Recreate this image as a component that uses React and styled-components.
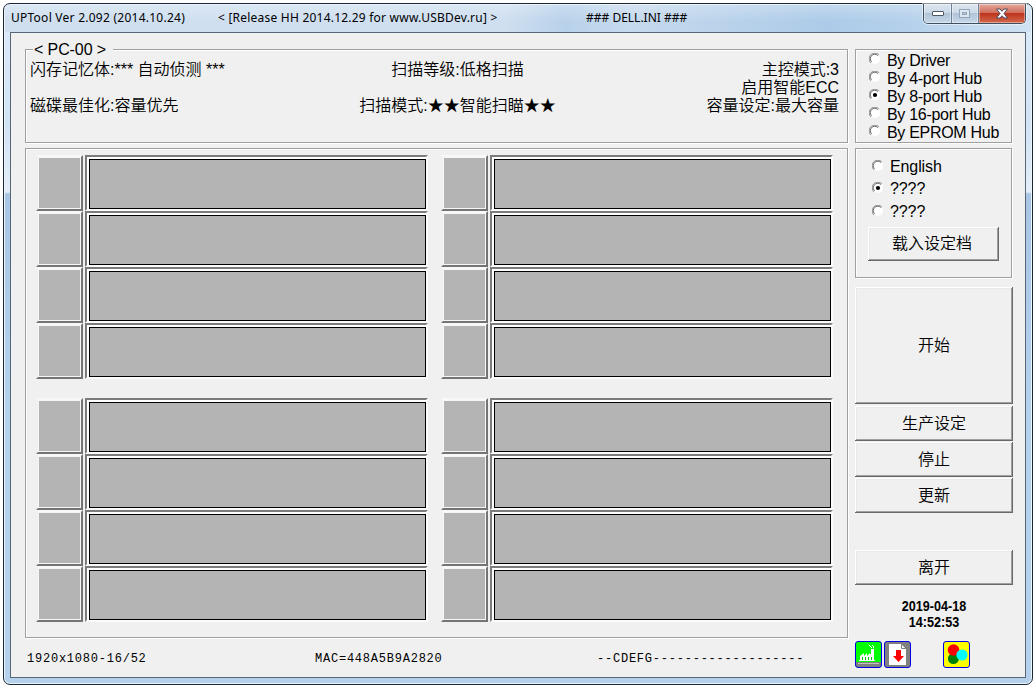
import React, { useState } from "react";
import styled, { createGlobalStyle } from "styled-components";

const GlobalStyle = createGlobalStyle`
    * {
        box-sizing: border-box;
    }
    body {
        margin: 0;
        background: #ffffff;
        overflow: hidden;
        color: #000000;
        font-family: "Liberation Sans", "Noto Sans CJK SC", sans-serif;
        font-size: 16px;
        font-weight: 350;
    }
    button {
        font: inherit;
        color: inherit;
    }
`;

const Window = styled.div`
    display: flex;
    flex-direction: column;
    width: 1030px;
    height: 682px;
    margin: 3px;
    padding: 0 6px 6px;
    border: 1px solid #1c2733;
    border-radius: 7px;
    background: linear-gradient(
        #dcebf8 0,
        #d2e3f4 120px,
        #e4eef8 188px,
        #a8c6e3 190px,
        #b5d2ed 420px,
        #b4d0ea 100%
    );
    box-shadow: inset 0 0 0 1px #e9f4fc;
`;

const TitleBar = styled.div`
    display: flex;
    align-items: flex-start;
    height: 27px;
    margin: 1px -5px 0;
    padding-left: 6px;
    border-radius: 5px 5px 0 0;
    background:
        linear-gradient(rgba(255, 255, 255, 0.25), rgba(255, 255, 255, 0) 60%),
        linear-gradient(
            90deg,
            #cfdff0 0,
            #cfdff0 500px,
            #b8d1ea 560px,
            #c6daee 620px,
            #bcd4eb 700px,
            #adcbe8 820px,
            #b4d0eb 900px,
            #cfe1f2 100%
        );
`;

const TitleText = styled.span`
    width: ${(props) => props.$width}px;
    line-height: 25px;
    font-family: "Noto Sans", "Open Sans", sans-serif;
    font-size: 12px;
    font-weight: 400;
    letter-spacing: ${(props) => props.$spacing || 0}px;
    white-space: pre;
`;

const WindowButtons = styled.div`
    display: flex;
    height: 20px;
    margin: -1px 5px 0 auto;
    border: 1px solid #3f4f60;
    border-top: none;
    border-radius: 0 0 5px 5px;
    box-shadow: 0 0 0 1px rgba(255, 255, 255, 0.5);
    overflow: hidden;
`;

const WindowButton = styled.div`
    display: flex;
    align-items: center;
    justify-content: center;
    width: ${(props) => props.$width}px;
    border-right: ${(props) => (props.$close ? "none" : "1px solid #6c8299")};
    box-shadow: inset 0 0 0 1px rgba(255, 255, 255, 0.4);
    background: ${(props) =>
        props.$close
            ? "linear-gradient(#e3a99c, #cf6c59 48%, #bd351d 50%, #d3684c)"
            : "linear-gradient(#dce6f0, #ccd9e6 48%, #b1c4d7 50%, #c6d8e9)"};
`;

const Client = styled.div`
    display: flex;
    gap: 7px;
    flex: 1;
    padding: 16px 13px 0 14px;
    border: 1px solid #56677a;
    background: #f0f0f0;
`;

const MainColumn = styled.div`
    display: flex;
    flex-direction: column;
    width: 823px;
`;

const SideColumn = styled.div`
    display: flex;
    flex-direction: column;
    width: 158px;
`;

const Group = styled.div`
    width: ${(props) => props.$width}px;
    height: ${(props) => props.$height}px;
    margin-bottom: 5px;
    padding: ${(props) => props.$padding || "0"};
    border: 1px solid #a0a0a0;
    box-shadow:
        inset 1px 1px 0 #ffffff,
        1px 1px 0 #ffffff;
`;

const Legend = styled.div`
    width: 80px;
    height: 18px;
    margin: -9px 0 0 7px;
    padding-left: 1px;
    background: #f0f0f0;
    letter-spacing: -0.1px;
    line-height: 18px;
    white-space: pre;
`;

const Info = styled.div`
    display: grid;
    grid-template-columns: 270px 315px 1fr;
    padding: 2px 8px 0 4px;
    line-height: 18px;
    white-space: pre;
`;

const InfoCell = styled.div`
    height: 18px;
    text-align: ${(props) => props.$align || "left"};
`;

const Bank = styled.div`
    display: grid;
    grid-template-columns: 392px 392px;
    column-gap: 13px;
    margin-bottom: 19px;
`;

const Slot = styled.div`
    display: flex;
    gap: 2px;
    height: 56px;
`;

const SlotTile = styled.div`
    width: 47px;
    height: 56px;
    border: 2px solid;
    border-color: #f8f8f8 #747474 #747474 #f0f0f0;
    box-shadow: inset 0 0 0 1px #f6f6f6;
    background: #b4b4b4;
`;

const SlotFrame = styled.div`
    width: 343px;
    height: 56px;
    padding: 2px 0 0 2px;
    border: 2px solid;
    border-color: #7c7c7c #fbfbfb #fbfbfb #7c7c7c;
    background: #ffffff;
`;

const SlotScreen = styled.div`
    height: 50px;
    border: 1px solid #000000;
    background: #b4b4b4;
`;

const StatusBar = styled.div`
    display: flex;
    padding: 7px 0 0 2px;
    font-family: "Liberation Mono", monospace;
    font-size: 12px;
    letter-spacing: 0.77px;
    line-height: 18px;
    white-space: pre;
`;

const StatusText = styled.span`
    width: ${(props) => props.$width}px;
`;

const Option = styled.label`
    display: flex;
    gap: 6px;
    height: ${(props) => props.$height}px;
    line-height: ${(props) => props.$height}px;
    letter-spacing: ${(props) => props.$spacing || 0}px;
    white-space: pre;
`;

const RadioIcon = styled.svg`
    width: 12px;
    height: 12px;
    margin-top: ${(props) => props.$top}px;
`;

const PushButton = styled.button`
    width: ${(props) => props.$width || 158}px;
    height: ${(props) => props.$height}px;
    margin: ${(props) => props.$margin || "0 0 1px"};
    padding: ${(props) => props.$padding || "0 0 4px"};
    border: 0;
    background: #f0f0f0;
    box-shadow:
        inset -1px -1px 0 #696969,
        inset 1px 1px 0 #ffffff,
        inset -2px -2px 0 #a0a0a0,
        inset 2px 2px 0 #e9e9e9;
`;

const Clock = styled.div`
    margin-top: 13px;
    text-align: center;
    font-size: 14px;
    font-weight: bold;
    line-height: 16px;
    transform: scaleX(0.9);
`;

const Shortcuts = styled.div`
    display: flex;
    gap: 2px;
    margin-top: 11px;
`;

const Shortcut = styled.svg`
    width: 27px;
    height: 27px;
    margin-left: ${(props) => props.$left || 0}px;
`;

const HUBS = [
    "By Driver",
    "By 4-port Hub",
    "By 8-port Hub",
    "By 16-port Hub",
    "By EPROM Hub",
];

const LANGUAGES = ["English", "????", "????"];

function Radio({ checked, top }) {
    return (
        <RadioIcon viewBox="0 0 12 12" $top={top}>
            <circle cx="6" cy="6" r="5" fill="#fff" />
            <path
                d="M1.8 9.8A5.4 5.4 0 0 1 9.8 1.8"
                fill="none"
                stroke="#8c8c8c"
            />
            <path
                d="M2.6 8.8A4.4 4.4 0 0 1 8.9 2.6"
                fill="none"
                stroke="#5f5f5f"
                strokeWidth="0.9"
            />
            {checked && <circle cx="6" cy="6" r="2.1" fill="#000" />}
        </RadioIcon>
    );
}

function SlotBank() {
    return (
        <Bank>
            {Array.from({ length: 8 }, (_, i) => (
                <Slot key={i}>
                    <SlotTile />
                    <SlotFrame>
                        <SlotScreen />
                    </SlotFrame>
                </Slot>
            ))}
        </Bank>
    );
}

function FactoryIcon() {
    return (
        <Shortcut viewBox="0 0 27 27">
            <rect x="0.5" y="0.5" width="26" height="26" rx="2.5" fill="#00ff00" />
            <path d="M1 21h25v4l-1 1H2l-1-1z" fill="#808080" />
            <path d="M3 22.5h21" stroke="#c0c0c0" />
            <path
                d="M4 20v-1h1v-4l4-3v3l3-3v3l3-3v1h1V8h3v11h1v1z"
                fill="#fff"
            />
            <path
                d="M7.5 16v3M10.5 16v3M13.5 16v3M16.5 16v3"
                stroke="#00c800"
            />
            <path
                d="M14 4.5h1M15 5.5h1M16 6.5h1M17 4.5h1M18 5.5h1M18 6.5h1"
                stroke="#fff"
            />
            <rect x="0.5" y="0.5" width="26" height="26" rx="2.5" fill="none" stroke="#0000e0" />
        </Shortcut>
    );
}

function DownloadIcon() {
    return (
        <Shortcut viewBox="0 0 27 27">
            <rect x="0.5" y="0.5" width="26" height="26" rx="2.5" fill="#808080" stroke="#0000e0" />
            <path d="M5 3h12l5 5v16H5z" fill="#fff" />
            <path d="M17.5 3v4.5H22" fill="none" stroke="#808080" />
            <path d="M12 9h5v6h3l-5.5 6L9 15h3z" fill="#ff0000" />
        </Shortcut>
    );
}

function ColorsIcon() {
    return (
        <Shortcut viewBox="0 0 27 27" $left={30}>
            <rect x="0.5" y="0.5" width="26" height="26" rx="2.5" fill="#ffff00" stroke="#0000e0" />
            <circle cx="10.4" cy="17.6" r="5.5" fill="#008000" />
            <circle cx="10.5" cy="9" r="5.8" fill="#ff0000" />
            <circle cx="19" cy="14" r="5.6" fill="#00ffff" />
        </Shortcut>
    );
}

export default function App() {
    const [hub, setHub] = useState(2);
    const [language, setLanguage] = useState(1);

    return (
        <>
            <GlobalStyle />
            <Window>
                <TitleBar>
                    <TitleText $width={207} $spacing={0.25}>
                        UPTool Ver 2.092 (2014.10.24)
                    </TitleText>
                    <TitleText $width={368} $spacing={0.22}>
                        {"< [Release HH 2014.12.29 for www.USBDev.ru] >"}
                    </TitleText>
                    <TitleText $width={130}>### DELL.INI ###</TitleText>
                    <WindowButtons>
                        <WindowButton $width={28}>
                            <svg width="14" height="6" viewBox="0 0 14 6">
                                <rect x="1.5" y="0.5" width="11" height="4" rx="0.5" fill="#fff" stroke="#4c5866" />
                            </svg>
                        </WindowButton>
                        <WindowButton $width={27}>
                            <svg width="12" height="10" viewBox="0 0 12 10">
                                <rect x="0.5" y="0.5" width="10" height="8" fill="#dde7f1" stroke="#93a5b8" />
                                <rect x="3.5" y="3.5" width="4" height="2" fill="#b9cadb" stroke="#93a5b8" />
                            </svg>
                        </WindowButton>
                        <WindowButton $width={46} $close>
                            <svg width="14" height="11" viewBox="0 0 14 11">
                                <path
                                    d="M1.5 1h3.6L7 3.3 8.9 1h3.6L9 5.5l3.5 4.5H8.9L7 7.7 5.1 10H1.5L5 5.5z"
                                    fill="#fff"
                                    stroke="#4b4a5c"
                                />
                            </svg>
                        </WindowButton>
                    </WindowButtons>
                </TitleBar>
                <Client>
                    <MainColumn>
                        <Group $width={823} $height={94}>
                            <Legend>{"< PC-00 >"}</Legend>
                            <Info>
                                <InfoCell>闪存记忆体:*** 自动侦测 ***</InfoCell>
                                <InfoCell $align="center">扫描等级:低格扫描</InfoCell>
                                <InfoCell $align="right">主控模式:3</InfoCell>
                                <InfoCell />
                                <InfoCell />
                                <InfoCell $align="right">启用智能ECC</InfoCell>
                                <InfoCell>磁碟最佳化:容量优先</InfoCell>
                                <InfoCell $align="center">扫描模式:★★智能扫瞄★★</InfoCell>
                                <InfoCell $align="right">容量设定:最大容量</InfoCell>
                            </Info>
                        </Group>
                        <Group $width={823} $height={490} $padding="6px 0 0 10px">
                            <SlotBank />
                            <SlotBank />
                        </Group>
                        <StatusBar>
                            <StatusText $width={288}>1920x1080-16/52</StatusText>
                            <StatusText $width={282}>MAC=448A5B9A2820</StatusText>
                            <StatusText>--CDEFG-------------------</StatusText>
                        </StatusBar>
                    </MainColumn>
                    <SideColumn>
                        <Group $width={157} $height={94} $padding="2px 0 0 13px">
                            {HUBS.map((name, i) => (
                                <Option
                                    key={name}
                                    $height={18}
                                    $spacing={-0.3}
                                    onClick={() => setHub(i)}
                                >
                                    <Radio checked={hub === i} top={1} />
                                    {name}
                                </Option>
                            ))}
                        </Group>
                        <Group $width={157} $height={130} $padding="7px 0 0 16px">
                            {LANGUAGES.map((name, i) => (
                                <Option
                                    key={i}
                                    $height={i === 0 ? 22 : 22.5}
                                    $spacing={-0.1}
                                    onClick={() => setLanguage(i)}
                                >
                                    <Radio checked={language === i} top={4} />
                                    {name}
                                </Option>
                            ))}
                            <PushButton
                                $width={131}
                                $height={34}
                                $margin="4px 0 0 -4px"
                                $padding="0 3px 4px 0"
                            >
                                载入设定档
                            </PushButton>
                        </Group>
                        <PushButton $height={117} $margin="4px 0 2px">
                            开始
                        </PushButton>
                        <PushButton $height={35}>生产设定</PushButton>
                        <PushButton $height={35}>停止</PushButton>
                        <PushButton $height={35}>更新</PushButton>
                        <PushButton $height={35} $margin="36px 0 0">
                            离开
                        </PushButton>
                        <Clock>
                            2019-04-18
                            <br />
                            14:52:53
                        </Clock>
                        <Shortcuts>
                            <FactoryIcon />
                            <DownloadIcon />
                            <ColorsIcon />
                        </Shortcuts>
                    </SideColumn>
                </Client>
            </Window>
        </>
    );
}
